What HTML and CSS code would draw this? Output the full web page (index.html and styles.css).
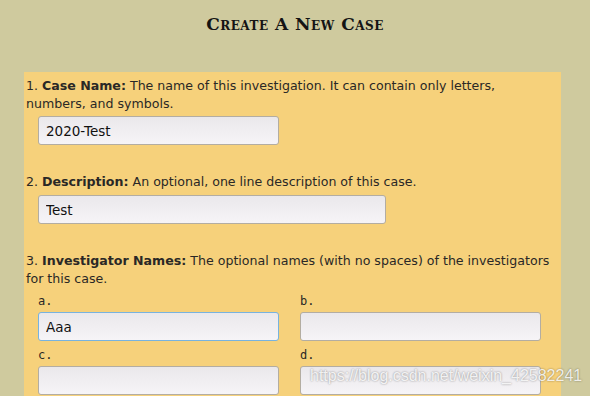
FILE: index.html
```html
<!DOCTYPE html>
<html lang="en">
<head>
    <meta charset="UTF-8">
    <title>Create A New Case</title>
    <link rel="stylesheet" href="styles.css">
</head>
<body>
<h1 class="title">Create A New Case</h1>
<div class="panel">
    <div class="step">
        <p>1. <b>Case Name:</b> The name of this investigation. It can contain only letters, numbers, and symbols.</p>
        <input class="field short" type="text" value="2020-Test">
    </div>
    <div class="step">
        <p>2. <b>Description:</b> An optional, one line description of this case.</p>
        <input class="field long" type="text" value="Test">
    </div>
    <div class="step">
        <p>3. <b>Investigator Names:</b> The optional names (with no spaces) of the investigators for this case.</p>
        <div class="names">
            <label>a.<input class="field focus" type="text" value="Aaa"></label>
            <label>b.<input class="field" type="text"></label>
            <label>c.<input class="field" type="text"></label>
            <label>d.<input class="field" type="text"></label>
        </div>
    </div>
</div>
<span class="mark">https://blog.csdn.net/weixin_42582241</span>
</body>
</html>
```

FILE: styles.css
```css
*{
    margin: 0;
    padding: 0;
    box-sizing: border-box;
}
body{
    background: #cfca9e;
    font-family: "DejaVu Sans", Verdana, sans-serif;
    font-size: 12.6px;
    color: #2a2826;
    overflow: hidden;
    height: 396px;
}
.title{
    font-family: "DejaVu Serif", "Liberation Serif", serif;
    font-variant: small-caps;
    font-size: 17px;
    font-weight: bold;
    text-align: center;
    letter-spacing: 0.5px;
    color: #141414;
    padding-top: 14px;
    height: 72px;
}
.panel{
    background: #f6d17b;
    margin-left: 24px;
    width: 537px;
    padding: 5px 8px 0 2px;
    height: 324px;
}
.step p{
    line-height: 18px;
}
.step{
    margin-bottom: 28px;
}
.field{
    display: block;
    height: 29px;
    border: 1px solid #b3ada2;
    border-radius: 3px;
    background: linear-gradient(#eae8eb, #f6f4f7);
    font-family: "DejaVu Sans", sans-serif;
    font-size: 13.5px;
    color: #111;
    padding: 0 7px;
    outline: none;
}
.short{
    width: 241px;
    margin: 3px 0 0 12px;
}
.long{
    width: 348px;
    margin: 4px 0 0 12px;
}
.focus{
    border-color: #78b3df;
}
.names{
    display: grid;
    grid-template-columns: 262px 241px;
    row-gap: 6px;
    padding: 5px 0 0 12px;
}
.names label{
    font-family: "DejaVu Sans Mono", monospace;
    font-size: 12px;
    line-height: 16px;
}
.names .field{
    width: 241px;
    margin-top: 3px;
}
.mark{
    position: absolute;
    left: 310px;
    top: 367px;
    font-family: "Liberation Sans", Arial, sans-serif;
    font-size: 16px;
    color: rgba(255,255,255,0.85);
    text-shadow: 0 0 2px rgba(0,0,0,0.45);
}
```
